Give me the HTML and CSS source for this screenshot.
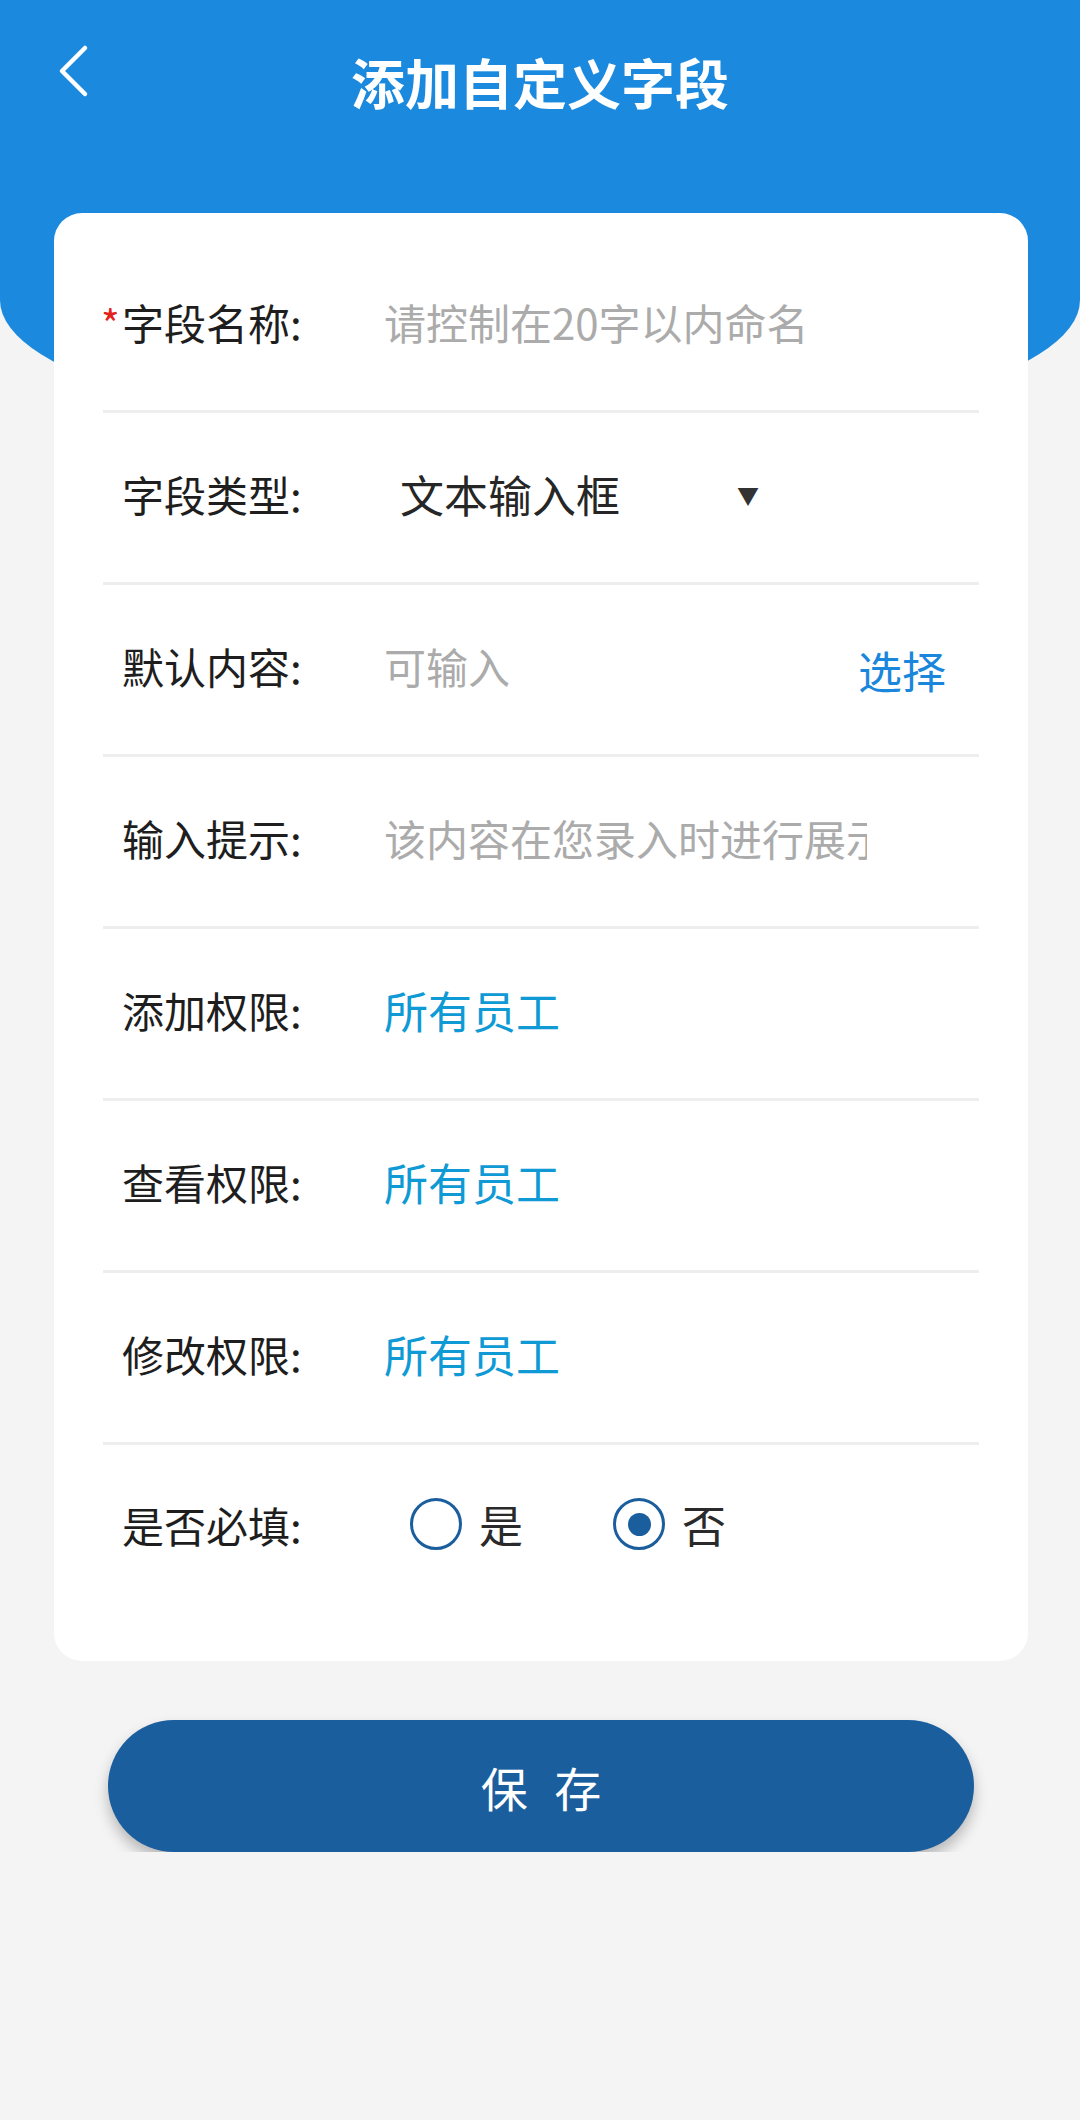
FILE: index.html
```html
<!DOCTYPE html>
<html lang="zh-CN">
<head>
<meta charset="UTF-8">
<meta name="viewport" content="width=device-width, initial-scale=1.0">
<title>添加自定义字段</title>
<link rel="stylesheet" href="styles.css">
</head>
<body>
  <div class="header">
    <div class="topbar">
      <a class="back">
        <svg width="34" height="54" viewBox="0 0 34 54">
          <path d="M28 4 L5 27 L28 50" fill="none" stroke="#fff" stroke-width="4.5" stroke-linecap="round" stroke-linejoin="round"/>
        </svg>
      </a>
      <h1 class="title">添加自定义字段</h1>
      <div></div>
    </div>
  </div>

  <div class="card">
    <div class="row">
      <span class="label"><i class="star">*</i>字段名称:</span>
      <span class="placeholder">请控制在20字以内命名</span>
    </div>
    <div class="row">
      <span class="label">字段类型:</span>
      <span class="select">文本输入框<i class="arrow">▼</i></span>
    </div>
    <div class="row">
      <span class="label">默认内容:</span>
      <span class="placeholder">可输入</span>
      <span class="pick">选择</span>
    </div>
    <div class="row">
      <span class="label">输入提示:</span>
      <span class="placeholder clip">该内容在您录入时进行展示</span>
    </div>
    <div class="row">
      <span class="label">添加权限:</span>
      <span class="link">所有员工</span>
    </div>
    <div class="row">
      <span class="label">查看权限:</span>
      <span class="link">所有员工</span>
    </div>
    <div class="row">
      <span class="label">修改权限:</span>
      <span class="link">所有员工</span>
    </div>
    <div class="row last">
      <span class="label">是否必填:</span>
      <div class="radios">
        <label class="radio"><span class="dot"></span>是</label>
        <label class="radio checked"><span class="dot"></span>否</label>
      </div>
    </div>
  </div>

  <button class="save">保 存</button>
</body>
</html>
```

FILE: styles.css
```css
body {
  margin: 0;
  background: #f4f4f4;
  font-family: "Noto Sans CJK SC", "Noto Sans", sans-serif;
  color: #222;
}

.header {
  height: 442px;
  background: #1a89de;
  border-radius: 0 0 50% 50% / 0 0 142px 142px;
}

.topbar {
  display: grid;
  grid-template-columns: 1fr auto 1fr;
  height: 164px;
}

.back {
  padding: 44px 0 0 57px;
}

.title {
  margin: 0;
  padding-top: 38px;
  font-size: 54px;
  line-height: 88px;
  font-weight: bold;
  color: #fff;
  height: 88px;
}

.card {
  margin: -229px 52px 0 54px;
  background: #fff;
  border-radius: 28px;
  padding: 28px 49px 44px;
}

.row {
  display: flex;
  align-items: center;
  height: 172px;
  box-sizing: border-box;
  border-bottom: 3px solid #eeeeee;
  padding: 0 33px 8px 19px;
}

.row.last {
  border-bottom: none;
  padding-bottom: 14px;
}

.label {
  width: 262px;
  flex: none;
  font-size: 42px;
  color: #1e1e1e;
  white-space: nowrap;
}

.star {
  font-style: normal;
  color: #e3211b;
  font-size: 40px;
  display: inline-block;
  width: 19px;
  margin-left: -21px;
  margin-right: 2px;
}

.placeholder {
  font-size: 42px;
  color: #ababab;
  white-space: nowrap;
}

.clip {
  width: 483px;
  overflow: hidden;
}

.select {
  display: flex;
  align-items: center;
  width: 359px;
  margin-left: 16px;
  font-size: 44px;
  color: #262626;
}

.arrow {
  font-style: normal;
  font-size: 22px;
  color: #333;
  margin-left: auto;
}

.pick {
  margin-left: auto;
  font-size: 44px;
  color: #1a87dc;
  padding-top: 8px;
}

.link {
  font-size: 44px;
  color: #0f9ad5;
}

.radios {
  display: flex;
  align-items: center;
  margin-left: 26px;
  gap: 90px;
}

.radio {
  display: flex;
  align-items: center;
  gap: 17px;
  font-size: 44px;
  color: #2a2a2a;
}

.dot {
  width: 52px;
  height: 52px;
  box-sizing: border-box;
  border: 3px solid #1b5e9e;
  border-radius: 50%;
  display: flex;
  align-items: center;
  justify-content: center;
}

.checked .dot::after {
  content: "";
  width: 23px;
  height: 23px;
  border-radius: 50%;
  background: #1b5e9e;
}

.save {
  display: block;
  margin: 59px 106px 0 108px;
  width: 866px;
  height: 132px;
  border: none;
  border-radius: 66px;
  background: #1b5e9e;
  color: #fff;
  font-family: "Noto Sans CJK SC", sans-serif;
  font-size: 47px;
  letter-spacing: 8px;
  text-indent: 8px;
  box-shadow: 0 8px 14px rgba(0, 0, 0, 0.25);
}
```
